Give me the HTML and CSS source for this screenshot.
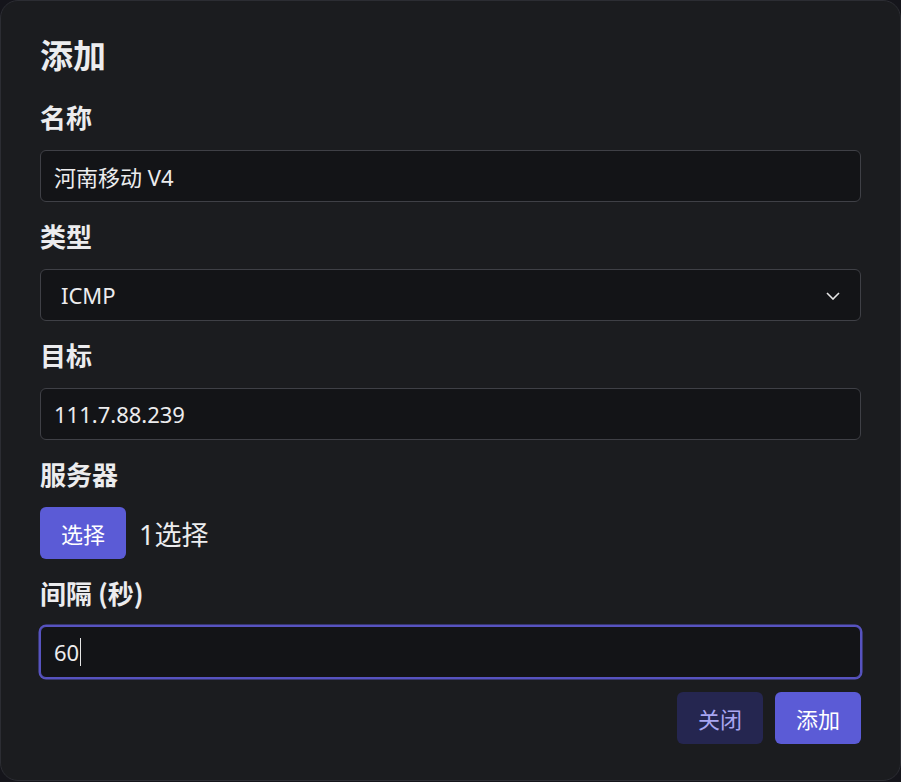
FILE: index.html
```html
<!DOCTYPE html>
<html lang="zh">
<head>
<meta charset="utf-8">
<title>添加</title>
<link rel="stylesheet" href="styles.css">
</head>
<body>
<div class="dialog">
  <h1 class="title">添加</h1>
  <label class="label">名称</label>
  <div class="field"><span class="value">河南移动 V4</span></div>
  <label class="label">类型</label>
  <div class="field select">
    <span class="value">ICMP</span>
    <svg class="chevron" width="14" height="8" viewBox="0 0 14 8"><path d="M1 1l6 6 6-6" fill="none" stroke="#e6e6e6" stroke-width="1.6"/></svg>
  </div>
  <label class="label">目标</label>
  <div class="field"><span class="value">111.7.88.239</span></div>
  <label class="label">服务器</label>
  <div class="server-row">
    <button class="btn primary">选择</button>
    <span class="server-count">1选择</span>
  </div>
  <label class="label">间隔 (秒)</label>
  <div class="field focused"><span class="value">60</span><span class="caret"></span></div>
  <div class="actions">
    <button class="btn soft">关闭</button>
    <button class="btn primary">添加</button>
  </div>
</div>
</body>
</html>
```
FILE: styles.css
```css
html, body {
  margin: 0;
  padding: 0;
  background: #15151b;
  width: 901px;
  height: 782px;
  overflow: hidden;
  font-family: "Noto Sans", "Noto Sans CJK SC", sans-serif;
  color: #ececee;
}
.dialog {
  box-sizing: border-box;
  width: 901px;
  height: 781px;
  background: #1b1c1f;
  border: 1px solid #2c2d33;
  border-radius: 18px;
  padding: 31px 39px 0 39px;
  display: flex;
  flex-direction: column;
}
.title {
  margin: 0;
  font-size: 33px;
  line-height: 44px;
  font-weight: 700;
  font-family: "Noto Sans CJK SC", sans-serif;
}
.label {
  display: block;
  font-family: "Noto Sans CJK SC", sans-serif;
  font-size: 26px;
  font-weight: 700;
  line-height: 34px;
  margin: 17px 0 16px;
}
.title + .label { margin-top: 24px; }
.field {
  box-sizing: border-box;
  height: 52px;
  border: 1px solid #3f4046;
  border-radius: 6px;
  background: #131417;
  display: flex;
  align-items: center;
  padding: 0 13px;
  font-size: 22px;
}
.value {
  font-family: "Noto Sans", "Noto Sans CJK SC", sans-serif;
  color: #ececee;
}
.select {
  justify-content: space-between;
  padding: 0 20px 0 20px;
}
.chevron { margin-top: 2px; }
.focused {
  border: 1px solid #5753c0;
  box-shadow: 0 0 0 1.5px #5753c0;
}
.caret {
  display: inline-block;
  width: 1px;
  height: 28px;
  background: #e6e6e6;
  margin-left: 1px;
}
.server-row {
  display: flex;
  align-items: center;
  gap: 13px;
}
.server-count {
  font-size: 27px;
  font-family: "Noto Sans", "Noto Sans CJK SC", sans-serif;
}
.btn {
  box-sizing: border-box;
  height: 52px;
  width: 86px;
  border: none;
  border-radius: 6px;
  font-family: "Noto Sans CJK SC", sans-serif;
  font-size: 22px;
  padding: 0;
  cursor: pointer;
}
.primary {
  background: #5b5bd6;
  color: #ffffff;
}
.soft {
  background: #252650;
  color: #a9a6f2;
}
.actions {
  display: flex;
  justify-content: flex-end;
  gap: 12px;
  margin-top: 14px;
}
```
